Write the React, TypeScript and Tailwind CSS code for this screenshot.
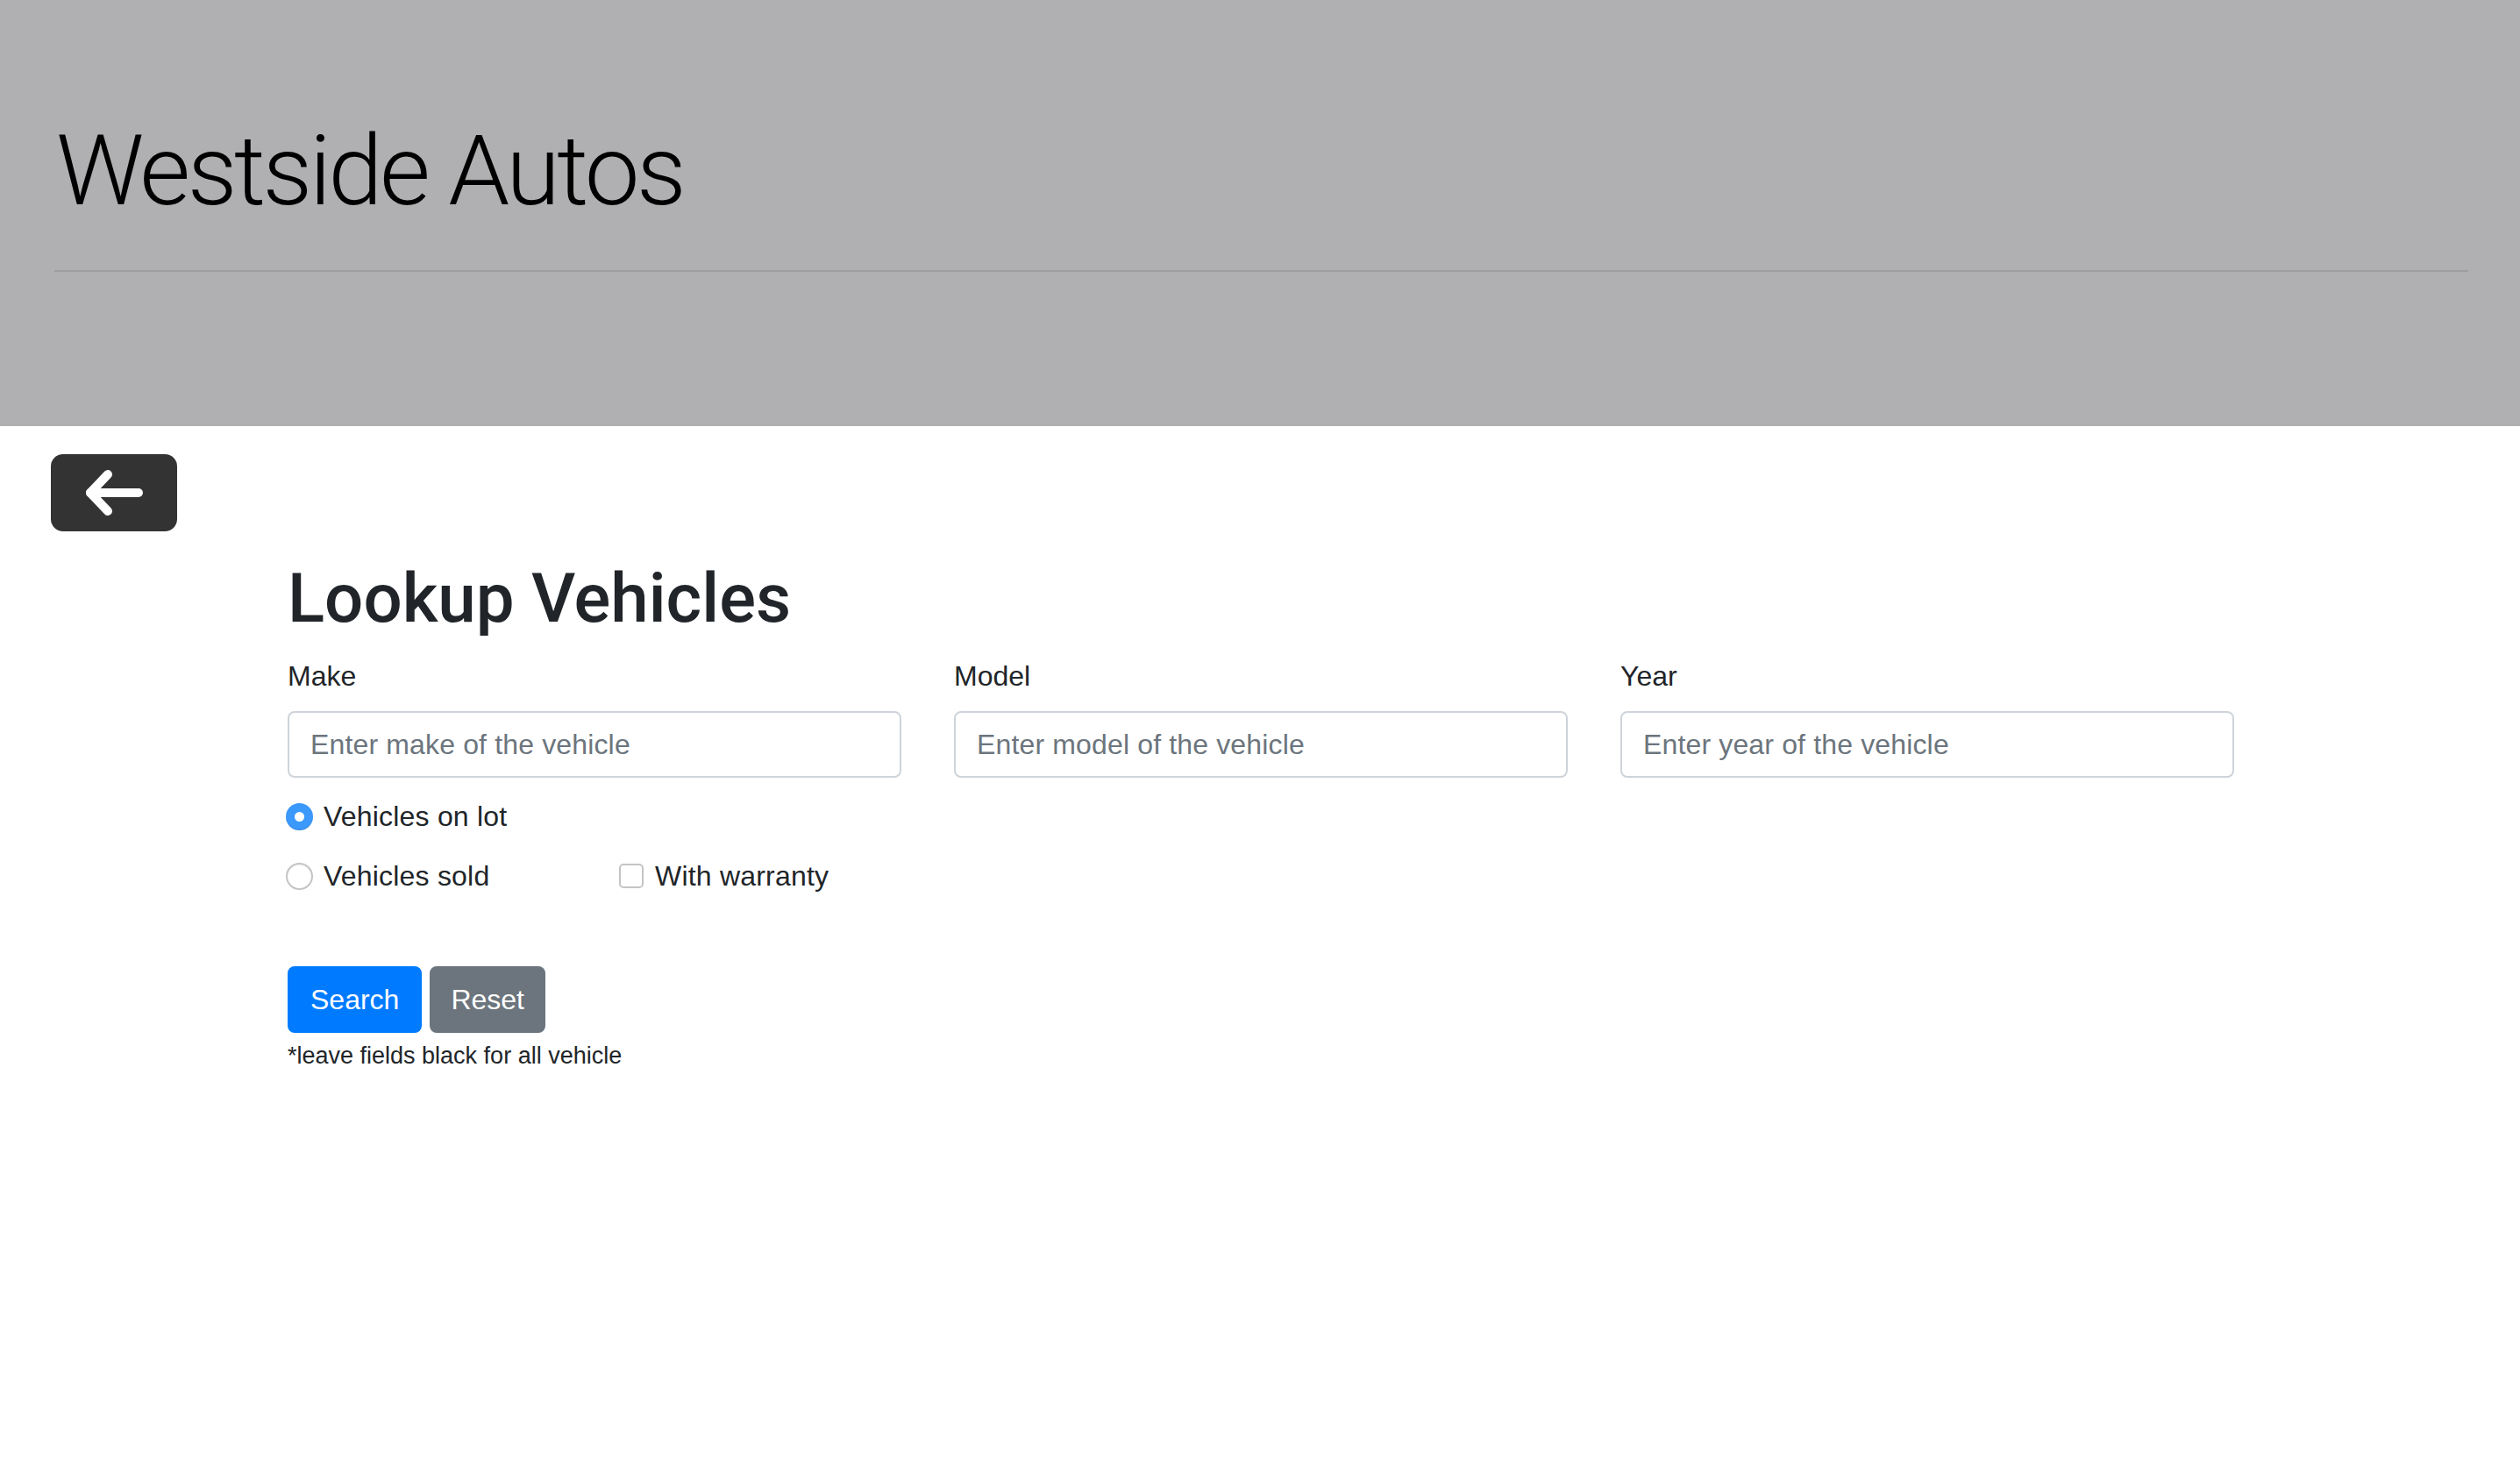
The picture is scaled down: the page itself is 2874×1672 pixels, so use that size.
import React from 'react';

const font = { fontFamily: '"Liberation Sans", Arial, sans-serif' };

const BackArrow: React.FC = () => (
  <svg width="71" height="62" viewBox="0 0 71 62" fill="none">
    <path d="M8 31 H63" stroke="white" strokeWidth="10" strokeLinecap="round" />
    <path d="M28 10 L8 31 L28 52" stroke="white" strokeWidth="10" strokeLinecap="round" strokeLinejoin="round" />
  </svg>
);

const Radio: React.FC<{ checked?: boolean; label: string }> = ({ checked, label }) => (
  <label className="flex items-center h-[48px] text-[32px] leading-[48px] text-[#212529]">
    {checked ? (
      <span className="w-[31px] h-[31px] rounded-full bg-[#3b99fc] flex items-center justify-center shadow-[inset_0_-1px_1px_rgba(0,0,0,0.15)]">
        <span className="w-[11px] h-[11px] rounded-full bg-white" />
      </span>
    ) : (
      <span className="w-[31px] h-[31px] rounded-full bg-white border-2 border-[#c4c4c4] shadow-[inset_0_1px_1px_rgba(0,0,0,0.05)]" />
    )}
    <span className="ml-[12px] tracking-[0.2px]">{label}</span>
  </label>
);

const Field: React.FC<{ label: string; placeholder: string }> = ({ label, placeholder }) => (
  <div className="w-[760px] px-[30px]">
    <label className="block text-[32px] leading-[48px] text-[#212529] mb-[16px]">{label}</label>
    <input
      type="text"
      placeholder={placeholder}
      className="block w-full h-[76px] px-[24px] text-[32px] tracking-[0.15px] text-[#495057] placeholder:text-[#6c757d] bg-white border-2 border-[#ced4da] rounded-[8px] outline-none"
      style={font}
    />
  </div>
);

export default function App() {
  return (
    <div className="min-h-screen bg-white" style={font}>
      <header className="bg-[#b0afb2] pl-[62px] pr-[59px] pt-[128px] pb-[176px]">
        <h1
          className="text-[112px] leading-[134px] font-light tracking-[-3.5px] text-black pl-[2px]"
          style={{ fontFamily: 'Roboto, "Liberation Sans", sans-serif' }}
        >
          Westside Autos
        </h1>
        <hr className="mt-[46px] border-0 border-t-2 border-black/10" />
      </header>

      <div className="pl-[58px] pt-[32px]">
        <button className="w-[144px] h-[88px] rounded-[14px] bg-[#333333] flex items-center justify-center">
          <BackArrow />
        </button>
      </div>

      <main className="w-[2282px] pl-[2px] mx-auto">
        <div className="px-[30px] mt-[29px]">
          <h2
            className="text-[78px] leading-[96px] font-medium text-[#212529] mb-[16px]"
            style={{ fontFamily: 'Roboto, "Liberation Sans", sans-serif' }}
          >
            Lookup Vehicles
          </h2>
        </div>

        <div className="flex">
          <Field label="Make" placeholder="Enter make of the vehicle" />
          <Field label="Model" placeholder="Enter model of the vehicle" />
          <Field label="Year" placeholder="Enter year of the vehicle" />
        </div>

        <div className="px-[28px] mt-[20px]">
          <Radio checked label="Vehicles on lot" />
          <div className="flex mt-[20px]">
            <div className="w-[380px]">
              <Radio label="Vehicles sold" />
            </div>
            <label className="flex items-center h-[48px] text-[32px] leading-[48px] text-[#212529]">
              <span className="w-[28px] h-[28px] rounded-[5px] bg-white border-2 border-[#c4c4c4]" />
              <span className="ml-[13px] tracking-[0.2px]">With warranty</span>
            </label>
          </div>
        </div>

        <div className="px-[30px] mt-[79px]">
          <div className="flex gap-[9px]">
            <button className="h-[76px] px-[24px] text-[32px] leading-[48px] text-white bg-[#007bff] border-2 border-[#007bff] rounded-[8px]">
              Search
            </button>
            <button className="h-[76px] px-[22px] text-[32px] leading-[48px] text-white bg-[#6c757d] border-2 border-[#6c757d] rounded-[8px]">
              Reset
            </button>
          </div>
          <p className="mt-[6px] text-[27px] leading-[40px] text-[#212529]">*leave fields black for all vehicle</p>
        </div>
      </main>
    </div>
  );
}
